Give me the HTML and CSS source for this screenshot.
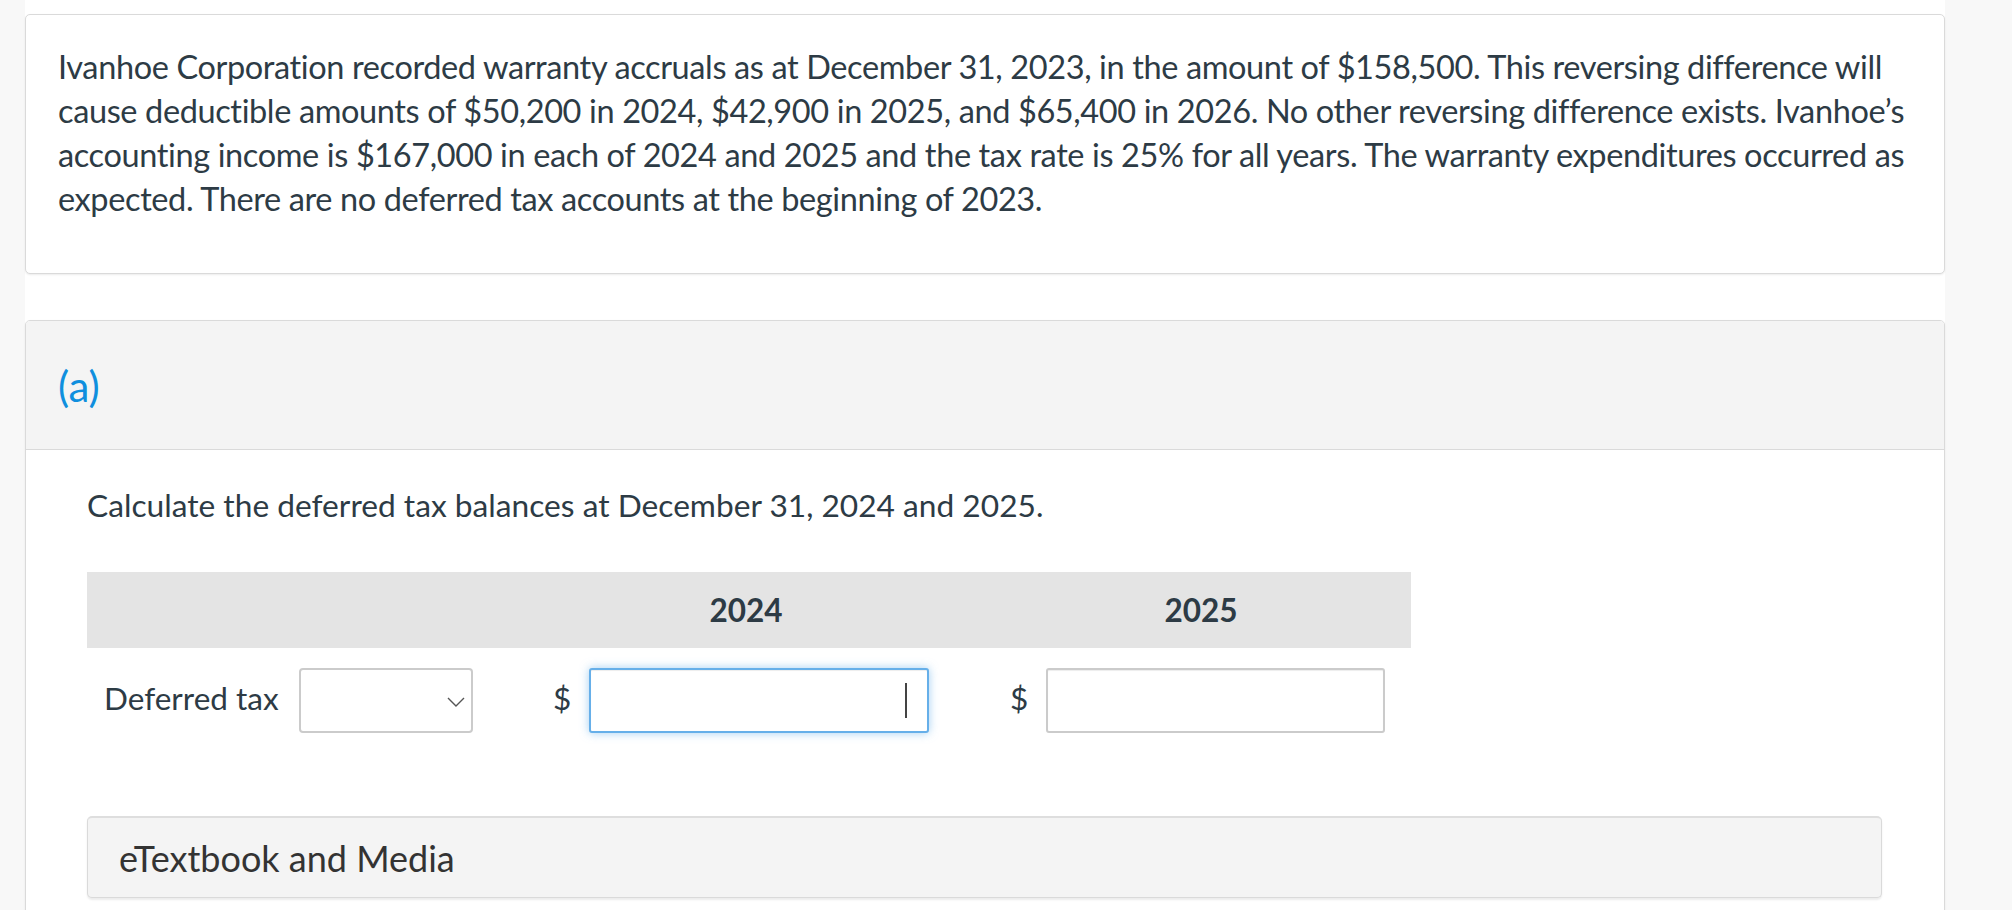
FILE: index.html
```html
<!DOCTYPE html>
<html lang="en">
<head>
<meta charset="utf-8">
<title>Deferred tax question</title>
<link rel="stylesheet" href="styles.css">
</head>
<body>
<div class="page">
  <div class="card intro">
    <p class="intro-text">Ivanhoe Corporation recorded warranty accruals as at December 31, 2023, in the amount of $158,500. This reversing difference will cause deductible amounts of $50,200 in 2024, $42,900 in 2025, and $65,400 in 2026. No other reversing difference exists. Ivanhoe’s accounting income is $167,000 in each of 2024 and 2025 and the tax rate is 25% for all years. The warranty expenditures occurred as expected. There are no deferred tax accounts at the beginning of 2023.</p>
  </div>

  <div class="card part">
    <div class="part-head">
      <span class="part-label">(a)</span>
    </div>
    <div class="part-body">
      <p class="prompt">Calculate the deferred tax balances at December 31, 2024 and 2025.</p>

      <div class="table">
        <div class="thead">
          <div class="th th-label"></div>
          <div class="th th-2024">2024</div>
          <div class="th th-2025">2025</div>
        </div>
        <div class="trow">
          <span class="row-label">Deferred tax</span>
          <div class="select">
            <svg class="chev" width="18" height="10" viewBox="0 0 18 10"><path d="M1 1 L9 9 L17 1" fill="none" stroke="#555" stroke-width="1.4"/></svg>
          </div>
          <span class="dollar d1">$</span>
          <span class="field focused"><input type="text" class="amount" aria-label="2024 amount"></span>
          <span class="dollar d2">$</span>
          <span class="field"><input type="text" class="amount amount-2" aria-label="2025 amount"></span>
        </div>
      </div>

      <div class="media">eTextbook and Media</div>
    </div>
  </div>
</div>
</body>
</html>
```

FILE: styles.css
```css
html, body {
  margin: 0;
  padding: 0;
}
body {
  background: #f8f8f8;
  font-family: Lato, "Open Sans", sans-serif;
  color: #2d3b45;
  overflow: hidden;
}
.page {
  margin-left: 25px;
  width: 1920px;
  min-height: 910px;
  background: #fff;
  padding-top: 14px;
  box-sizing: border-box;
}
.card {
  border: 1px solid #dadada;
  border-radius: 5px;
  box-shadow: 0 1px 2px rgba(0, 0, 0, 0.08);
  background: #fff;
}
.intro {
  padding: 30px 14px 52px 32px;
}
.intro-text {
  margin: 0;
  font-size: 32.5px;
  letter-spacing: -0.38px;
  line-height: 44px;
}
.part {
  margin-top: 46px;
  overflow: hidden;
}
.part-head {
  background: #f4f4f4;
  border-bottom: 1px solid #dadada;
  height: 129px;
  display: flex;
  align-items: center;
  padding-left: 32px;
  padding-top: 2px;
  box-sizing: border-box;
}
.part-label {
  color: #0f8fde;
  font-size: 42px;
  line-height: 50px;
}
.part-body {
  padding: 36px 61px 80px 61px;
}
.prompt {
  margin: 0;
  font-size: 31.7px;
  line-height: 39px;
}
.table {
  margin-top: 47px;
  width: 1324px;
}
.thead {
  display: grid;
  grid-template-columns: 414px 490px 420px;
  background: #e4e4e4;
  height: 76px;
  align-items: center;
}
.th {
  text-align: center;
  font-weight: 700;
  font-size: 31.5px;
}
.trow {
  display: flex;
  align-items: center;
  padding: 20px 0 20px 17px;
  font-size: 31.5px;
}
.row-label {
  width: 195px;
  margin-bottom: 6px;
}
.select {
  width: 174px;
  height: 65px;
  box-sizing: border-box;
  border: 2px solid #cbcbcb;
  border-radius: 4px;
  display: flex;
  align-items: center;
  justify-content: flex-end;
  padding-right: 6px;
}
.chev {
  display: block;
  margin-top: 2px;
}
.dollar {
  width: 18px;
  margin-right: 18px;
  margin-bottom: 6px;
}
.d1 {
  margin-left: 80px;
}
.d2 {
  margin-left: 81px;
}
.field {
  position: relative;
  display: block;
}
.amount {
  display: block;
  width: 340px;
  height: 65px;
  box-sizing: border-box;
  border: 2px solid #cbcbcb;
  border-radius: 3px;
  box-shadow: inset 0 1px 1px rgba(0, 0, 0, 0.075);
  background: #fff;
  font-family: Lato, sans-serif;
  font-size: 31.5px;
  text-align: right;
  padding: 0 20px;
  outline: none;
}
.amount-2 {
  width: 339px;
}
.focused .amount {
  border-color: #66afe9;
  box-shadow: inset 0 1px 1px rgba(0, 0, 0, 0.075), 0 0 10px rgba(102, 175, 233, 0.6);
}
.focused::after {
  content: "";
  position: absolute;
  right: 22px;
  top: 15px;
  width: 2px;
  height: 35px;
  background: #444;
}
.media {
  margin-top: 63px;
  width: 1795px;
  height: 82px;
  box-sizing: border-box;
  background: #f4f4f4;
  border: 1px solid #dadada;
  border-top: 2px solid #dedede;
  border-radius: 5px;
  box-shadow: 0 2px 2px rgba(0, 0, 0, 0.08);
  color: #333;
  font-size: 36px;
  padding-left: 31px;
  display: flex;
  align-items: center;
}
```
